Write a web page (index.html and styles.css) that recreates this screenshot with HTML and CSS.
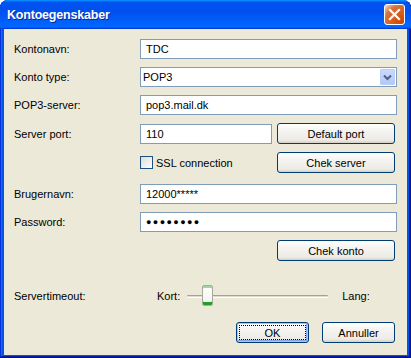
FILE: index.html
```html
<!DOCTYPE html>
<html lang="da">
<head>
  <meta charset="UTF-8">
  <title>Kontoegenskaber</title>
  <link rel="stylesheet" href="styles.css">
</head>
<body>

<div class="window">
  <div class="titlebar">
    <span class="title">Kontoegenskaber</span>
    <button class="close" aria-label="Luk">
      <svg width="13" height="13" viewBox="0 0 13 13">
        <path d="M2 2 L11 11 M11 2 L2 11" stroke="#fff" stroke-width="2.2" stroke-linecap="square"/>
      </svg>
    </button>
  </div>

  <div class="body">
    <div class="row">
      <label>Kontonavn:</label>
      <input class="text" type="text" value="TDC">
    </div>

    <div class="row">
      <label>Konto type:</label>
      <div class="select">
        <span class="select-value">POP3</span>
        <span class="select-arrow">
          <svg width="9" height="7" viewBox="0 0 9 7">
            <path d="M1 1.5 L4.5 5 L8 1.5" fill="none" stroke="#4d6185" stroke-width="2"/>
          </svg>
        </span>
      </div>
    </div>

    <div class="row">
      <label>POP3-server:</label>
      <input class="text" type="text" value="pop3.mail.dk">
    </div>

    <div class="row row-btn">
      <label>Server port:</label>
      <input class="text port" type="text" value="110">
      <button class="btn">Default port</button>
    </div>

    <div class="row row-btn">
      <label></label>
      <span class="check"></span>
      <span class="check-label">SSL connection</span>
      <button class="btn">Chek server</button>
    </div>

    <div class="row gap-sm">
      <label>Brugernavn:</label>
      <input class="text" type="text" value="12000*****">
    </div>

    <div class="row">
      <label>Password:</label>
      <div class="text password">●●●●●●●●</div>
    </div>

    <div class="row row-btn">
      <button class="btn">Chek konto</button>
    </div>

    <div class="row row-slider gap-lg">
      <label>Servertimeout:</label>
      <span class="kort">Kort:</span>
      <div class="slider">
        <div class="track"></div>
        <div class="thumb" style="left: 15px"></div>
      </div>
      <span class="lang">Lang:</span>
    </div>

    <div class="row row-btn row-actions gap-md">
      <button class="btn btn-small btn-default">OK</button>
      <button class="btn btn-small">Annuller</button>
    </div>
  </div>
</div>

</body>
</html>
```

FILE: styles.css
```css
body {
  margin: 0;
  background: #fff;
  font-family: "Liberation Sans", Arial, sans-serif;
  font-size: 11px;
  color: #000;
}
.window {
  width: 411px;
  height: 358px;
  display: flex;
  flex-direction: column;
  background: #0055e5;
  border-radius: 8px 8px 0 0;
  overflow: hidden;
  box-shadow: inset -1px -1px #00138c, inset 1px 0 #0831d9, inset -2px -2px #001ea0, inset 2px 0 #166aee;
  box-sizing: border-box;
  padding: 0 4px 3px 4px;
}
.titlebar {
  height: 29px;
  flex: none;
  display: flex;
  align-items: center;
  margin: 0 -4px;
  padding: 0 6px 0 7px;
  background: linear-gradient(180deg, #0997ff, #0053ee 8%, #0050ee 40%, #06f 88%, #06f 93%, #005bff 95%, #003dd7 96%, #003dd7);
}
.title {
  flex: 1;
  color: #fff;
  font-weight: bold;
  font-size: 12.5px;
  letter-spacing: -0.2px;
  text-shadow: 1px 1px #0a2a9a;
}
.close {
  width: 21px;
  height: 21px;
  padding: 0;
  display: flex;
  align-items: center;
  justify-content: center;
  border: 1px solid #fff;
  border-radius: 3px;
  background: radial-gradient(circle at 90% 90%, #cc4600 0%, #dc6527 55%, #cd7546 70%, #ffccb2 95%, #fff 100%);
}
.body {
  flex: 1;
  background: #ece9d8;
  padding: 10px 10px 0 10px;
  display: flex;
  flex-direction: column;
  gap: 8px;
}
.row {
  display: flex;
  align-items: center;
  height: 20px;
  flex: none;
}
.row label {
  width: 126px;
  flex: none;
}
.row-btn {
  height: 21px;
}
.gap-sm {
  margin-top: 3px;
}
.gap-lg {
  margin-top: 16px;
  height: 22px;
}
.gap-md {
  margin-top: 7px;
}
.text {
  flex: 1;
  height: 20px;
  box-sizing: border-box;
  border: 1px solid #7f9db9;
  background: #fff;
  padding: 0 5px;
  font-family: inherit;
  font-size: 11px;
  color: #000;
  outline: none;
}
.text.port {
  flex: none;
  width: 132px;
}
.password {
  display: flex;
  align-items: center;
  font-size: 9px;
  letter-spacing: 1.4px;
}
.select {
  flex: 1;
  height: 20px;
  box-sizing: border-box;
  border: 1px solid #7f9db9;
  background: #fff;
  display: flex;
  align-items: center;
  padding: 0 1px 0 2px;
}
.select-value {
  flex: 1;
}
.select-arrow {
  width: 15px;
  height: 16px;
  box-sizing: border-box;
  display: flex;
  align-items: center;
  justify-content: center;
  border: 1px solid #b9cdf6;
  border-radius: 1px;
  background: linear-gradient(180deg, #c9daff, #b4c8f6);
}
.btn {
  width: 118px;
  height: 21px;
  margin-left: auto;
  margin-right: 2px;
  padding: 0;
  box-sizing: border-box;
  border: 1px solid #003c74;
  border-radius: 3px;
  background: linear-gradient(180deg, #fff 0%, #f6f5f1 30%, #ecebe6 85%, #d6d0c5 100%);
  font-family: inherit;
  font-size: 11px;
  color: #000;
}
.check {
  width: 13px;
  height: 13px;
  box-sizing: border-box;
  border: 1px solid #1c5180;
  background: linear-gradient(135deg, #dcdcd7, #fff);
}
.check-label {
  margin-left: 3px;
}
.row-slider {
  align-items: center;
}
.kort {
  margin-left: 17px;
}
.slider {
  position: relative;
  width: 141px;
  height: 22px;
  margin-left: 7px;
  display: flex;
  align-items: center;
}
.track {
  width: 100%;
  height: 3px;
  box-sizing: border-box;
  border-top: 1px solid #a3a198;
  border-bottom: 1px solid #fff;
  background: #dedbd0;
  border-radius: 1px;
}
.thumb {
  position: absolute;
  top: 0;
  width: 11px;
  height: 21px;
  box-sizing: border-box;
  border: 1px solid #a9a89f;
  border-radius: 2px;
  background: linear-gradient(180deg, #fff, #f2f1ea);
  box-shadow: inset 0 -3px #21a121, inset 0 2px #9bd89b;
}
.lang {
  margin-left: 14px;
}
.row-actions {
  justify-content: flex-end;
  gap: 13px;
}
.btn-small {
  width: 73px;
  margin-left: 0;
}
.btn-default {
  position: relative;
  margin-right: 0;
  box-shadow: inset 0 0 0 1px #aac4ee, inset -1px -1px 0 1px #8aa6e6;
}
.btn-default::after {
  content: "";
  position: absolute;
  inset: 2px;
  border: 1px dotted #000;
}
```
